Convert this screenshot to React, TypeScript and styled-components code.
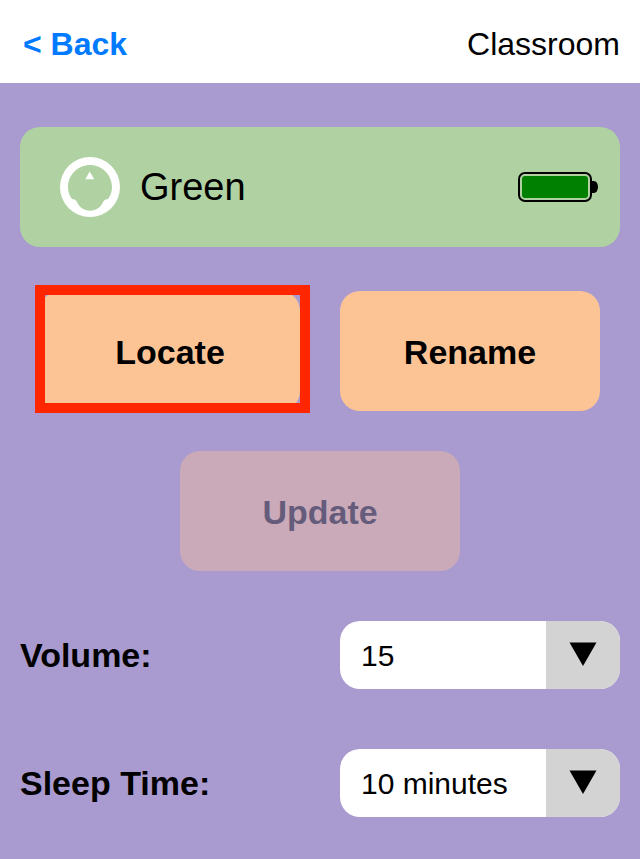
import styled, { createGlobalStyle } from "styled-components";

const GlobalStyle = createGlobalStyle`
    html, body {
        margin: 0;
        padding: 0;
        background: #a99ad0;
        font-family: "Liberation Sans", Arial, sans-serif;
    }
`;

function SensorIcon() {
    return (
        <svg width="60" height="60" viewBox="0 0 60 60">
            <circle cx="30" cy="30" r="30" fill="#fff" />
            <path
                d="M30 8 C42 8 52 18 52 30 C52 35 50.500 39 48 42 C46 42 44 43 43 45 C41 50 36 53.700 30 53.700 C24 53.700 19 50 17 45 C16 43 14 42 12 42 C9.500 39 8 35 8 30 C8 18 18 8 30 8 Z"
                fill="#b0d2a2"
            />
            <path d="M29.700 14.500 L34.200 22.300 L25.300 22.300 Z" fill="#fff" />
        </svg>
    );
}

function BatteryIcon() {
    return (
        <svg width="80" height="30" viewBox="0 0 80 30">
            <rect x="1" y="1" width="72" height="28" rx="6" fill="#b0d2a2" stroke="#000" strokeWidth="2" />
            <rect x="4" y="4" width="66" height="22" rx="3" fill="#008000" />
            <path d="M74 9 H76 A4 6 0 0 1 76 21 H74 Z" fill="#000" />
        </svg>
    );
}

function Caret() {
    return (
        <svg width="28" height="24" viewBox="0 0 28 24">
            <path d="M0.500 0.500 H27.500 L14 24 Z" fill="#000" />
        </svg>
    );
}

export default function App() {
    return (
        <Page>
            <GlobalStyle />
            <Header>
                <BackLink>&lt; Back</BackLink>
                <Title>Classroom</Title>
            </Header>
            <Content>
                <DeviceCard>
                    <DeviceInfo>
                        <SensorIcon />
                        <DeviceName>Green</DeviceName>
                    </DeviceInfo>
                    <BatteryIcon />
                </DeviceCard>
                <ButtonRow>
                    <ActionButton>
                        Locate
                        <Highlight />
                    </ActionButton>
                    <ActionButton>Rename</ActionButton>
                </ButtonRow>
                <UpdateButton disabled>Update</UpdateButton>
                <SettingRow>
                    <SettingLabel>Volume:</SettingLabel>
                    <Select>
                        <SelectValue>15</SelectValue>
                        <SelectArrow>
                            <Caret />
                        </SelectArrow>
                    </Select>
                </SettingRow>
                <SleepRow>
                    <SettingLabel>Sleep Time:</SettingLabel>
                    <Select>
                        <SelectValue>10 minutes</SelectValue>
                        <SelectArrow>
                            <Caret />
                        </SelectArrow>
                    </Select>
                </SleepRow>
            </Content>
        </Page>
    );
}

const Page = styled.div`
    width: 640px;
    height: 859px;
    overflow: hidden;
    background: #a99ad0;
`;

const Header = styled.header`
    height: 83px;
    background: #fff;
    display: flex;
    justify-content: space-between;
    align-items: center;
    padding: 6px 20px 0 23px;
    box-sizing: border-box;
`;

const BackLink = styled.a`
    font-size: 32px;
    font-weight: bold;
    color: #007aff;
`;

const Title = styled.div`
    font-size: 32px;
    color: #000;
`;

const Content = styled.main`
    padding: 44px 20px 0;
    display: flex;
    flex-direction: column;
`;

const DeviceCard = styled.section`
    height: 120px;
    background: #b0d2a2;
    border-radius: 20px;
    display: flex;
    justify-content: space-between;
    align-items: center;
    padding: 0 22px 0 40px;
`;

const DeviceInfo = styled.div`
    display: flex;
    align-items: center;
    gap: 20px;
`;

const DeviceName = styled.div`
    font-size: 38px;
    color: #000;
`;

const ButtonRow = styled.div`
    display: flex;
    justify-content: center;
    gap: 40px;
    margin-top: 44px;
`;

const ActionButton = styled.button`
    position: relative;
    width: 260px;
    height: 120px;
    border: none;
    border-radius: 20px;
    padding: 3px 0 0;
    background: #fcc495;
    color: #000;
    font-family: inherit;
    font-size: 34px;
    font-weight: bold;
`;

const Highlight = styled.span`
    position: absolute;
    left: -5px;
    top: -6px;
    width: 275px;
    height: 128px;
    box-sizing: border-box;
    border: 10px solid #ff2600;
`;

const UpdateButton = styled(ActionButton)`
    width: 280px;
    align-self: center;
    margin-top: 40px;
    opacity: 0.4;
`;

const SettingRow = styled.div`
    display: flex;
    justify-content: space-between;
    align-items: center;
    margin-top: 50px;
`;

const SleepRow = styled(SettingRow)`
    margin-top: 60px;
`;

const SettingLabel = styled.label`
    font-size: 34px;
    font-weight: bold;
    color: #000;
`;

const Select = styled.div`
    width: 280px;
    height: 68px;
    border-radius: 20px;
    overflow: hidden;
    background: #fff;
    display: flex;
`;

const SelectValue = styled.div`
    flex: 1;
    display: flex;
    align-items: center;
    padding: 2px 0 0 21px;
    font-size: 30px;
    color: #000;
`;

const SelectArrow = styled.div`
    width: 74px;
    background: #d3d3d3;
    display: flex;
    justify-content: center;
    align-items: center;
    svg {
        margin-top: -2px;
    }
`;
